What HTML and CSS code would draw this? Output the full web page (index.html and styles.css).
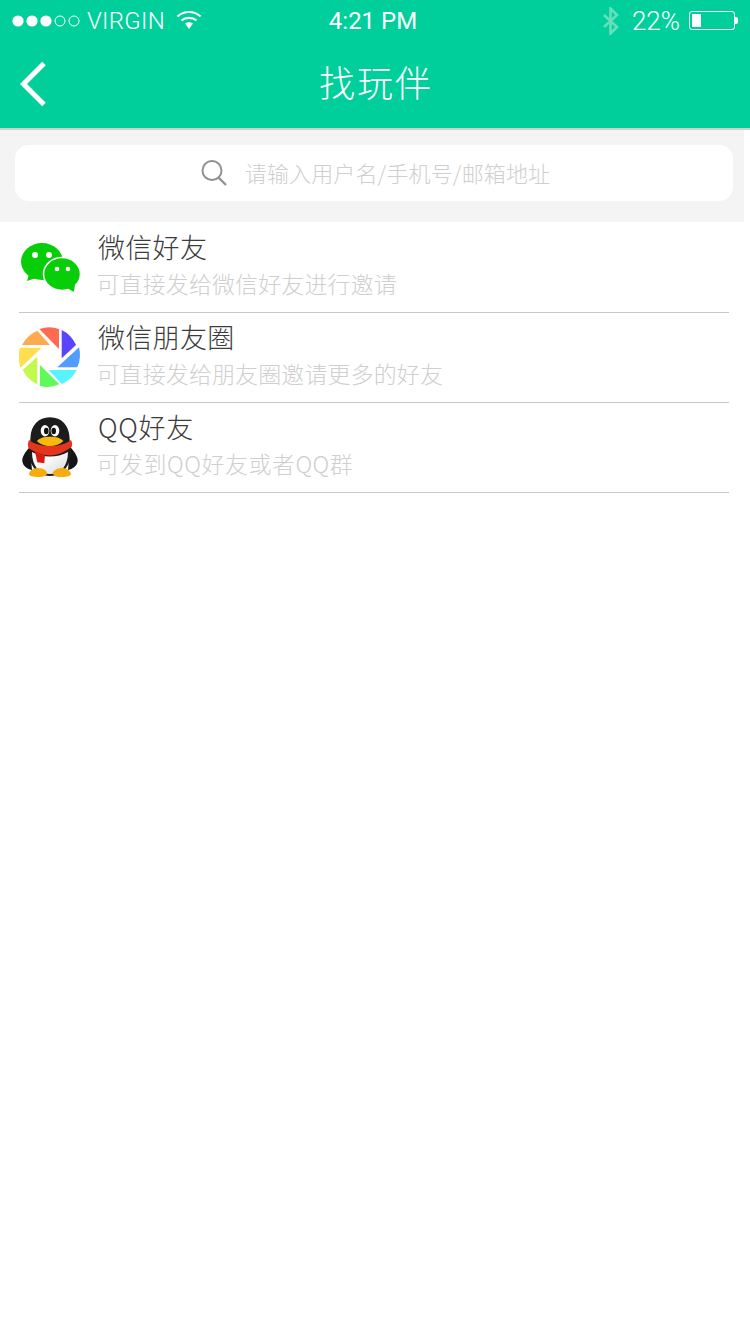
FILE: index.html
```html
<!DOCTYPE html>
<html lang="zh">
<head>
<meta charset="utf-8">
<title>找玩伴</title>
<link rel="stylesheet" href="styles.css">
</head>
<body>
<header class="top">
  <div class="status">
    <div class="status-left">
      <svg class="dots" width="68" height="12" viewBox="0 0 68 12"><circle cx="6" cy="6" r="5.6" fill="#fff"/><circle cx="20" cy="6" r="5.6" fill="#fff"/><circle cx="34" cy="6" r="5.6" fill="#fff"/><circle cx="48" cy="6" r="5" fill="none" stroke="#fff"/><circle cx="62" cy="6" r="5" fill="none" stroke="#fff"/></svg>
      <span class="carrier">VIRGIN</span>
      <svg class="wifi" width="26" height="20" viewBox="0 0 26 20"><path d="M1.5 6.500C8 .5 18 .5 24.500 6.500M5.500 10.500C9.500 7 16.500 7 20.500 10.500" fill="none" stroke="#fff" stroke-width="2.200"/><path d="M9 13.500C11.500 11.800 14.500 11.800 17 13.500L13 19Z" fill="#fff"/></svg>
    </div>
    <span class="clock">4:21 PM</span>
    <div class="status-right">
      <svg class="bt" width="18" height="28" viewBox="0 0 18 28"><path d="M2 8l13 12-6.500 6.500V1.500L15 8 2 20" fill="none" stroke="#66dfbd" stroke-width="2.600"/></svg>
      <span class="pct">22%</span>
      <div class="battery"><div class="battery-fill"></div></div>
      <div class="battery-tip"></div>
    </div>
  </div>
  <div class="nav">
    <svg class="back" width="30" height="46" viewBox="0 0 30 46"><path d="M26 2.500 5.500 23 26 43.500" fill="none" stroke="#fff" stroke-width="5"/></svg>
    <h1 class="title">找玩伴</h1>
  </div>
</header>
<section class="search-wrap">
  <div class="search">
    <svg class="search-icon" width="26" height="26" viewBox="0 0 26 26"><circle cx="11" cy="10.500" r="9.500" fill="none" stroke="#929292" stroke-width="2"/><path d="M17.500 17.500 25 25" stroke="#929292" stroke-width="2.400"/></svg>
    <span class="placeholder">请输入用户名/手机号/邮箱地址</span>
  </div>
</section>
<ul class="list">
  <li class="row">
    <svg class="icon" width="64" height="64" viewBox="0 0 64 64">
      <ellipse cx="23" cy="25.500" rx="21" ry="18.500" fill="#08ce0a"/>
      <path d="M10 38 8 45 20 41Z" fill="#08ce0a"/>
      <ellipse cx="43" cy="38" rx="18.500" ry="16.500" fill="#08ce0a" stroke="#fff" stroke-width="1.500"/>
      <path d="M48 52 56 48 55 56Z" fill="#08ce0a"/>
      <circle cx="16" cy="19" r="3" fill="#fff"/><circle cx="30" cy="19" r="3" fill="#fff"/><circle cx="38" cy="33" r="2.300" fill="#fff"/><circle cx="49" cy="33" r="2.300" fill="#fff"/>
    </svg>
    <div class="text">
      <div class="name">微信好友</div>
      <div class="desc">可直接发给微信好友进行邀请</div>
    </div>
  </li>
  <li class="row">
    <svg class="icon" width="64" height="64" viewBox="0 0 64 64">
      <path d="M42.700 4A30 30 0 0 1 57 19L42.700 32.300Z" fill="#5a45ff"/>
      <path d="M60 21.300A30 30 0 0 1 58.300 41.300H38.300Z" fill="#4f9dff"/>
      <path d="M57.700 44A30 30 0 0 1 42.700 58L29.700 44Z" fill="#56f4ff"/>
      <path d="M40.300 58.300A30 30 0 0 1 21 60V39Z" fill="#5ff95a"/>
      <path d="M18.300 58.300A30 30 0 0 1 3.700 44L18.300 30.700Z" fill="#c3f94f"/>
      <path d="M1.700 41.700A30 30 0 0 1 1 21.700H22.700Z" fill="#ffdf50"/>
      <path d="M3 19A30 30 0 0 1 18.300 4.700L31 19Z" fill="#ffaa4f"/>
      <path d="M20.300 3A30 30 0 0 1 40 3V23Z" fill="#ff6a50"/>
    </svg>
    <div class="text">
      <div class="name">微信朋友圈</div>
      <div class="desc">可直接发给朋友圈邀请更多的好友</div>
    </div>
  </li>
  <li class="row row-qq">
    <svg class="icon" width="64" height="64" viewBox="0 0 64 64">
      <defs><linearGradient id="belly" x1="0" y1="0" x2="1" y2="1"><stop offset="0.400" stop-color="#fafafa"/><stop offset="1" stop-color="#d8d8d8"/></linearGradient></defs>
      <path d="M11 31C6 36 3 41 3.300 45c.5 5 5 8 9.700 9ZM51 31c5 5 8 10 7.700 14-.5 5-5 8-9.700 9Z" fill="#151515"/>
      <path d="M31 1.300C19 1.300 12 10 11.500 21c-.2 5-1 8-1.500 12C9 47 17 60 31 60s22-13 21-27c-.5-4-1.300-7-1.500-12C50 10 43 1.300 31 1.300Z" fill="#1c1c1c"/>
      <path d="M13 36C13 50 20 58 31 58s18-8 18-22C38 42 24 42 13 36Z" fill="url(#belly)"/>
      <ellipse cx="26" cy="14.700" rx="4.300" ry="5.700" fill="#fff"/><ellipse cx="36" cy="14.700" rx="4.300" ry="5.700" fill="#fff"/>
      <ellipse cx="27.300" cy="15" rx="2.300" ry="3.300" fill="#111"/><ellipse cx="34.700" cy="15" rx="2.300" ry="3.300" fill="#111"/>
      <path d="M10 24C20 32 42 32 52 24c1.500 3 1.500 5 .5 7C46 36 39 39 31 39.500 23 39 15 36 9.500 32c-1-3-.7-5 .5-8Z" fill="#e3361c"/>
      <path d="M16 35.700 26 38.500 25.300 47.300 18.300 46.300Z" fill="#d81b10"/>
      <path d="M18 25C21 21.500 25 20.700 31 20.700S41 21.500 44.300 25C41 28.500 36 30 31 30S21 28.500 18 25Z" fill="#fab90f"/>
      <path d="M10 58c1-4 5-6 9-6 5 0 10 3 9 6-1 2.500-5 3-9 3-5 0-9-1-9-3ZM52 58c-1-4-5-6-9-6-5 0-10 3-9 6 1 2.500 5 3 9 3 5 0 9-1 9-3Z" fill="#f9ab0c"/>
    </svg>
    <div class="text">
      <div class="name">QQ好友</div>
      <div class="desc">可发到QQ好友或者QQ群</div>
    </div>
  </li>
</ul>
</body>
</html>
```
FILE: styles.css
```css
* { box-sizing: border-box; }
html, body { margin: 0; padding: 0; background: #fff; }
body { width: 750px; height: 1334px; overflow: hidden; font-family: "Noto Sans CJK SC", sans-serif; font-weight: 300; }
.top { background: #00cf9b; height: 130px; border-bottom: 2px solid #d0d0d0; color: #fff; }
.status { display: grid; grid-template-columns: 1fr auto 1fr; align-items: center; height: 41px; padding: 0 12px; font-family: Roboto, sans-serif; font-size: 24px; font-weight: 300; }
.status-left, .status-right { display: flex; align-items: center; }
.status-right { justify-content: flex-end; }
.carrier { margin-left: 7px; letter-spacing: 0.300px; }
.wifi { margin-left: 11px; margin-top: -1px; }
.clock { font-weight: 400; font-size: 24px; transform: translateX(-2px); }
.bt { margin-right: 12px; }
.pct { font-size: 26px; }
.battery { width: 46px; height: 19px; margin-left: 9px; border: 1px solid #fff; border-radius: 3px; padding: 2px; }
.battery-fill { width: 9px; height: 100%; background: #fff; }
.battery-tip { width: 3px; height: 7px; background: #fff; border-radius: 0 2px 2px 0; }
.nav { display: flex; align-items: center; justify-content: center; position: relative; height: 87px; padding: 0 0 8px 2px; }
.back { position: absolute; left: 18px; top: 20px; }
.title { margin: 0; font-size: 36px; font-weight: 300; letter-spacing: 2px; line-height: 1; }
.search-wrap { width: 744px; height: 92px; padding: 15px 11px 21px 15px; background: #f4f4f4; }
.search { height: 56px; display: flex; align-items: center; justify-content: center; background: #fff; border-radius: 14px; padding-left: 3px; }
.search-icon { margin-right: 18px; }
.placeholder { color: #cfcfcf; font-size: 22px; letter-spacing: 0.140px; margin-bottom: 3px; }
.list { list-style: none; margin: 0; padding: 1px 21px 0 19px; }
.row { position: relative; display: flex; height: 90px; border-bottom: 1px solid #c8c8c8; }
.icon { position: absolute; left: 0; top: 13px; }
.text { margin-left: 79px; padding-top: 6px; }
.name { color: #3c3c3c; font-size: 27px; line-height: 36px; letter-spacing: 0.300px; }
.desc { color: #cfcfcf; font-size: 23px; line-height: 36px; letter-spacing: 0.100px; margin-left: -1.500px; }
.row-qq .name { letter-spacing: 0.700px; }
.row-qq .desc { letter-spacing: 0.500px; }
```
